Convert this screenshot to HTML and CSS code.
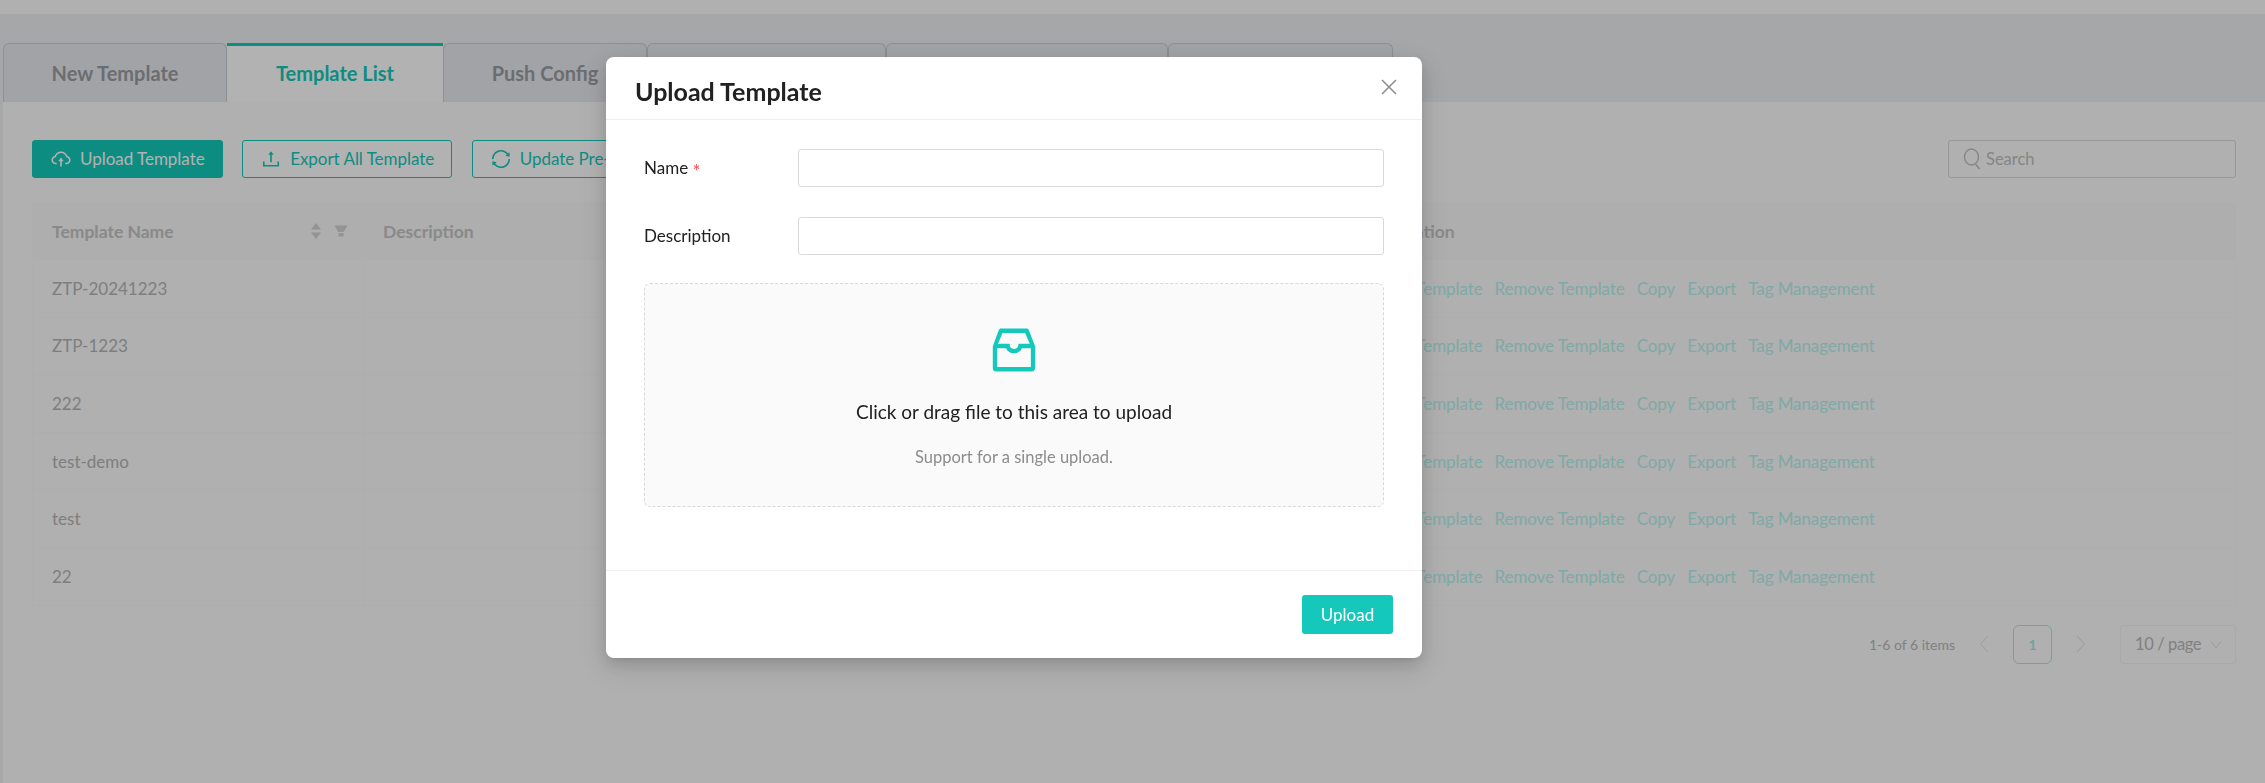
FILE: index.html
```html
<!DOCTYPE html>
<html lang="en">
<head>
<meta charset="utf-8">
<title>Upload Template</title>
<link rel="stylesheet" href="styles.css">
</head>
<body>
<div class="topbar"></div>
<div class="tabs">
  <div class="tab tab-new">New Template</div>
  <div class="tab tab-active">Template List</div>
  <div class="tab tab-push">Push Config</div>
  <div class="tab tab-4"></div>
  <div class="tab tab-5"></div>
  <div class="tab tab-6"></div>
</div>
<main class="content">
  <div class="toolbar">
    <button class="btn btn-solid"><svg class="ico" viewBox="0 0 1024 1024"><path d="M518.3 459a8 8 0 0 0-12.6 0l-112 141.7a7.98 7.98 0 0 0 6.3 12.9h73.9V856c0 4.4 3.6 8 8 8h60c4.4 0 8-3.6 8-8V613.7H624c6.7 0 10.4-7.7 6.3-12.9L518.3 459z"/><path d="M811.4 366.7C765.6 245.9 648.9 160 512.2 160S258.8 245.8 213 366.6C127.3 389.1 64 467.2 64 560c0 110.5 89.5 200 199.9 200H304c4.4 0 8-3.6 8-8v-60c0-4.4-3.6-8-8-8h-40.1c-33.7 0-65.4-13.4-89-37.7-23.5-24.2-36-56.8-34.9-90.6.9-26.4 9.9-51.2 26.2-72.1 16.7-21.3 40.1-36.8 66.1-43.7l37.9-9.9 13.9-36.6c8.6-22.8 20.6-44.1 35.7-63.4a245.6 245.6 0 0 1 52.4-49.9c41.1-28.9 89.5-44.2 140-44.2s98.9 15.3 140 44.2c19.9 14 37.5 30.8 52.4 49.9 15.1 19.3 27.1 40.7 35.7 63.4l13.8 36.5 37.8 10C846.1 454.5 884 503.8 884 560c0 33.1-12.9 64.3-36.3 87.7a123.07 123.07 0 0 1-87.6 36.3H720c-4.4 0-8 3.6-8 8v60c0 4.4 3.6 8 8 8h40.1C870.5 760 960 670.5 960 560c0-92.7-63.1-170.7-148.6-193.3z"/></svg>Upload Template</button>
    <button class="btn btn-line"><svg class="ico" viewBox="0 0 1024 1024"><path d="M400 317.7h73.9V656c0 4.4 3.6 8 8 8h60c4.4 0 8-3.6 8-8V317.7H624c6.7 0 10.4-7.7 6.3-12.9L518.3 163a8 8 0 0 0-12.6 0l-112 141.7c-4.1 5.3-.4 13 6.3 13zM878 626h-60c-4.4 0-8 3.6-8 8v154H214V634c0-4.4-3.6-8-8-8h-60c-4.4 0-8 3.6-8 8v198c0 17.7 14.3 32 32 32h684c17.7 0 32-14.3 32-32V634c0-4.4-3.6-8-8-8z"/></svg>Export All Template</button>
    <button class="btn btn-line"><svg class="ico" viewBox="0 0 1024 1024"><path d="M168 504.2c1-43.7 10-86.1 26.9-126 17.3-41 42.1-77.7 73.7-109.4S337 212.3 378 195c42.4-17.9 87.4-27 133.9-27s91.5 9.1 133.8 27A341.5 341.5 0 0 1 755 268.8c9.9 9.9 19.2 20.4 27.8 31.4l-60.2 47a8 8 0 0 0 3 14.1l175.7 43c5 1.2 9.9-2.6 9.9-7.7l.8-180.9c0-6.7-7.7-10.5-12.9-6.3l-56.4 44.1C765.8 155.1 646.2 92 511.8 92 282.7 92 96.3 275.6 92 503.8a8 8 0 0 0 8 8.2h60c4.4 0 7.9-3.5 8-7.8zm756 7.8h-60c-4.4 0-7.9 3.5-8 7.8-1 43.7-10 86.1-26.9 126-17.3 41-42.1 77.8-73.7 109.4A342.45 342.45 0 0 1 512.1 856a342.24 342.24 0 0 1-243.2-100.8c-9.9-9.9-19.2-20.4-27.8-31.4l60.2-47a8 8 0 0 0-3-14.1l-175.7-43c-5-1.2-9.9 2.6-9.9 7.7l-.7 181c0 6.7 7.7 10.5 12.9 6.3l56.4-44.1C258.2 868.9 377.8 932 512.2 932c229.2 0 415.5-183.7 419.8-411.8a8 8 0 0 0-8-8.2z"/></svg>Update Pre-built Template</button>
    <div class="search">
      <svg class="search-ico" viewBox="0 0 18 22"><ellipse cx="8.5" cy="9" rx="7" ry="8"/><path d="M12.5 16l4 5"/></svg>
      <span>Search</span>
    </div>
  </div>
  <div class="table">
    <div class="row head">
      <div class="cell cell-name">Template Name
        <span class="sorter"><svg viewBox="0 0 10 16"><path d="M5 0l5 6.5H0zM5 16l5-6.5H0z"/></svg><svg viewBox="0 0 1024 1024" class="filter"><path d="M349 838c0 17.7 14.2 32 31.8 32h262.4c17.6 0 31.8-14.3 31.8-32V642H349v196zm531.1-684H143.9c-24.5 0-39.8 26.7-27.5 48l221.3 376h348.8l221.3-376c12.1-21.3-3.2-48-27.7-48z"/></svg></span>
      </div>
      <div class="cell">Description</div>
      <div class="cell cell-op">Operation</div>
    </div>
    <div class="row"><div class="cell">ZTP-20241223</div><div class="cell"></div><div class="cell actions"><span>Edit Template</span><span>Remove Template</span><span>Copy</span><span>Export</span><span>Tag Management</span></div></div>
    <div class="row"><div class="cell">ZTP-1223</div><div class="cell"></div><div class="cell actions"><span>Edit Template</span><span>Remove Template</span><span>Copy</span><span>Export</span><span>Tag Management</span></div></div>
    <div class="row"><div class="cell">222</div><div class="cell"></div><div class="cell actions"><span>Edit Template</span><span>Remove Template</span><span>Copy</span><span>Export</span><span>Tag Management</span></div></div>
    <div class="row"><div class="cell">test-demo</div><div class="cell"></div><div class="cell actions"><span>Edit Template</span><span>Remove Template</span><span>Copy</span><span>Export</span><span>Tag Management</span></div></div>
    <div class="row"><div class="cell">test</div><div class="cell"></div><div class="cell actions"><span>Edit Template</span><span>Remove Template</span><span>Copy</span><span>Export</span><span>Tag Management</span></div></div>
    <div class="row"><div class="cell">22</div><div class="cell"></div><div class="cell actions"><span>Edit Template</span><span>Remove Template</span><span>Copy</span><span>Export</span><span>Tag Management</span></div></div>
  </div>
  <div class="pager">
    <span class="total">1-6 of 6 items</span>
    <svg class="chev" viewBox="0 0 10 18"><path d="M9 1L1.5 9 9 17"/></svg>
    <span class="page">1</span>
    <svg class="chev" viewBox="0 0 10 18"><path d="M1 1l7.5 8L1 17"/></svg>
    <span class="size">10 / page<svg class="chev-down" viewBox="0 0 14 10"><path d="M1 1l6 8 6-8"/></svg></span>
  </div>
</main>

<div class="mask"></div>
<section class="modal">
  <header class="modal-head">
    <h2>Upload Template</h2>
    <svg class="close" viewBox="0 0 16 16"><path d="M1 1l14 14M15 1L1 15"/></svg>
  </header>
  <div class="modal-body">
    <div class="field"><label>Name <i>*</i></label><div class="input"></div></div>
    <div class="field"><label>Description</label><div class="input"></div></div>
    <div class="dragger">
      <svg class="inbox" viewBox="0 0 1024 1024"><path d="M885.2 446.3l-.2-.8-112.2-285.1c-5-16.1-19.9-27.2-36.8-27.2H281.2c-17 0-32.1 11.3-36.9 27.6L139.4 443l-.3.7-.2.8c-1.3 4.9-1.7 9.9-1 14.8-.1 1.6-.2 3.2-.2 4.8V830a60.9 60.9 0 0 0 60.8 60.8h627.2c33.5 0 60.8-27.3 60.9-60.8V464.1c0-1.3 0-2.6-.1-3.7.4-4.9 0-9.6-1.3-14.1zm-295.8-43l-.3 15.7c-.8 44.9-31.8 75.1-77.1 75.1-22.1 0-41.1-7.1-54.8-20.6S436 441.2 435.6 419l-.3-15.7H229.5L309 210h399.2l81.7 193.3H589.4zm-375 76.8h157.3c24.3 57.1 76 90.8 140.4 90.8 33.7 0 65-9.4 90.3-27.2 22.2-15.6 39.5-37.4 50.7-63.6h156.5V814H214.4V480.1z"/></svg>
      <p class="drag-title">Click or drag file to this area to upload</p>
      <p class="drag-hint">Support for a single upload.</p>
    </div>
  </div>
  <footer class="modal-foot"><button class="btn-upload">Upload</button></footer>
</section>
</body>
</html>
```

FILE: styles.css
```css
* { box-sizing: border-box; }
html, body { margin: 0; height: 100%; }
body {
  font-family: Lato, "Liberation Sans", sans-serif;
  font-size: 17px;
  background: #f0f1f3;
  overflow: hidden;
}
.topbar { height: 14px; background: #fcfcfc; }
.tabs { display: flex; padding: 29px 0 0 3px; height: 88px; background: #edeff1; }
.tab {
  height: 59px;
  padding-top: 17px;
  text-align: center;
  font-size: 20px;
  font-weight: 700;
  color: #9a9da3;
  background: #e8eaee;
  border: 1px solid #c8ced4;
  border-bottom: 0;
  border-radius: 6px 6px 0 0;
}
.tab-new { width: 224px; }
.tab-active { width: 216px; color: #14c9bb; background: #fff; border: 0; border-top: 3px solid #14c9bb; border-radius: 0; padding-top: 15px; }
.tab-push { width: 204px; }
.tab-4 { width: 239px; }
.tab-5 { width: 282px; }
.tab-6 { width: 225px; }
.content { margin-left: 3px; padding: 38px 29px 0; background: #fcfcfc; height: 681px; }
.toolbar { display: flex; gap: 19.5px; height: 38px; }
.btn {
  display: inline-flex;
  align-items: center;
  gap: 8px;
  height: 38px;
  padding: 0 17px 1px;
  font: 17px Lato, sans-serif;
  letter-spacing: -.03px;
  border: 1px solid #14c9bb;
  border-radius: 3px;
  white-space: nowrap;
}
.btn-solid { background: #14c9bb; color: #fff; }
.btn-line { background: #fff; color: #14c9bb; }
.ico { width: 22px; height: 22px; fill: currentColor; flex: none; }
.search {
  display: flex;
  align-items: center;
  gap: 5px;
  width: 288px;
  height: 38px;
  margin-left: auto;
  padding-left: 14px;
  border: 1px solid #d9d9d9;
  border-radius: 3px;
  color: #bfbfbf;
  font-size: 16.5px;
}
.search-ico { width: 18px; height: 22px; fill: none; stroke: #bfbfbf; stroke-width: 1.4; }
.table { margin-top: 24px; width: 2204px; color: #b5b5b5; }
.row { display: grid; grid-template-columns: 331px 1000px 1fr; height: 57.6px; border: 1px solid #f9f9f9; border-top: 0; }
.head { height: 58px; background: #f9f9f9; border-top: 1px solid #f9f9f9; font-weight: 700; font-size: 17.5px; color: #c5c5c5; }
.cell { display: flex; align-items: center; padding-left: 19px; border-right: 1px solid #f9f9f9; white-space: nowrap; }
.cell:last-child { border-right: 0; }
.cell-name { justify-content: space-between; }
.cell-op { padding-left: 11px; }
.sorter { display: flex; align-items: center; gap: 12px; padding-right: 14px; }
.sorter svg { width: 10px; height: 16px; fill: #d4d4d4; }
.sorter .filter { width: 16px; height: 16px; }
.actions { gap: 12px; color: #b5f3ee; padding-left: 19px; letter-spacing: -.1px; }
.pager { display: flex; align-items: center; justify-content: flex-end; height: 39px; margin-top: 19px; color: #b8b8b8; }
.total { font-size: 14px; margin-right: 24px; }
.chev { width: 10px; height: 18px; fill: none; stroke: #dcdcdc; stroke-width: 1; }
.page {
  width: 39px;
  height: 39px;
  margin: 0 24px;
  border: 1px solid #a8e8e2;
  border-radius: 6px;
  color: #a8e8e2;
  font-weight: 700;
  font-size: 14px;
  line-height: 38px;
  text-align: center;
}
.size {
  display: flex;
  align-items: center;
  justify-content: space-between;
  width: 116px;
  height: 39px;
  margin-left: 34px;
  padding: 0 13px 0 14px;
  border: 1px solid #f3f3f3;
  border-radius: 3px;
  font-size: 16.5px;
  letter-spacing: -.4px;
}
.chev-down { width: 12px; height: 9px; fill: none; stroke: #dcdcdc; stroke-width: 1; }
.mask { position: fixed; inset: 0; background: rgba(0, 0, 0, .3); }
.modal {
  position: fixed;
  left: 606px;
  top: 57px;
  width: 816px;
  height: 601px;
  display: flex;
  flex-direction: column;
  background: #fff;
  border-radius: 8px;
  box-shadow: 0 6px 16px rgba(0,0,0,.12), 0 9px 28px 8px rgba(0,0,0,.08), 0 3px 6px -4px rgba(0,0,0,.16);
}
.modal-head {
  display: flex;
  align-items: center;
  justify-content: space-between;
  height: 63px;
  padding: 0 25px 0 29px;
  border-bottom: 1px solid #f0f0f0;
}
.modal-head h2 { margin: 5px 0 0; font-size: 25px; font-weight: 700; color: #212121; }
.close { width: 16px; height: 16px; fill: none; stroke: #8c8c8c; stroke-width: 1.5; margin-bottom: 3px; }
.modal-body { flex: 1; padding: 29px 38px 0 38px; }
.field { display: flex; align-items: center; height: 38px; margin-bottom: 30px; }
.field label { width: 154px; color: #212121; white-space: nowrap; padding-bottom: 1px; }
.field i { color: #ff4d4f; font-style: normal; font-size: 19px; line-height: 0; vertical-align: -4px; }
.input { flex: 1; height: 38px; background: #fff; border: 1px solid #d9d9d9; border-radius: 3px; }
.dragger {
  display: flex;
  flex-direction: column;
  align-items: center;
  height: 224px;
  margin-top: -2px;
  padding-top: 39px;
  background: #fafafa;
  border: 1px dashed #d9d9d9;
  border-radius: 6px;
}
.inbox { width: 58px; height: 58px; fill: #14c9bb; flex: none; margin-top: -2px; }
.drag-title { margin: 20px 0 0; font-size: 19px; line-height: 26px; color: #212121; }
.drag-hint { margin: 19px 0 0; font-size: 16.5px; line-height: 26px; color: #8c8c8c; }
.modal-foot { display: flex; justify-content: flex-end; height: 88px; padding: 24px 29px 0; border-top: 1px solid #f0f0f0; }
.btn-upload {
  width: 91px;
  height: 39px;
  background: #14c9bb;
  color: #fff;
  border: 0;
  border-radius: 3px;
  font: 17px Lato, sans-serif;
}
```
